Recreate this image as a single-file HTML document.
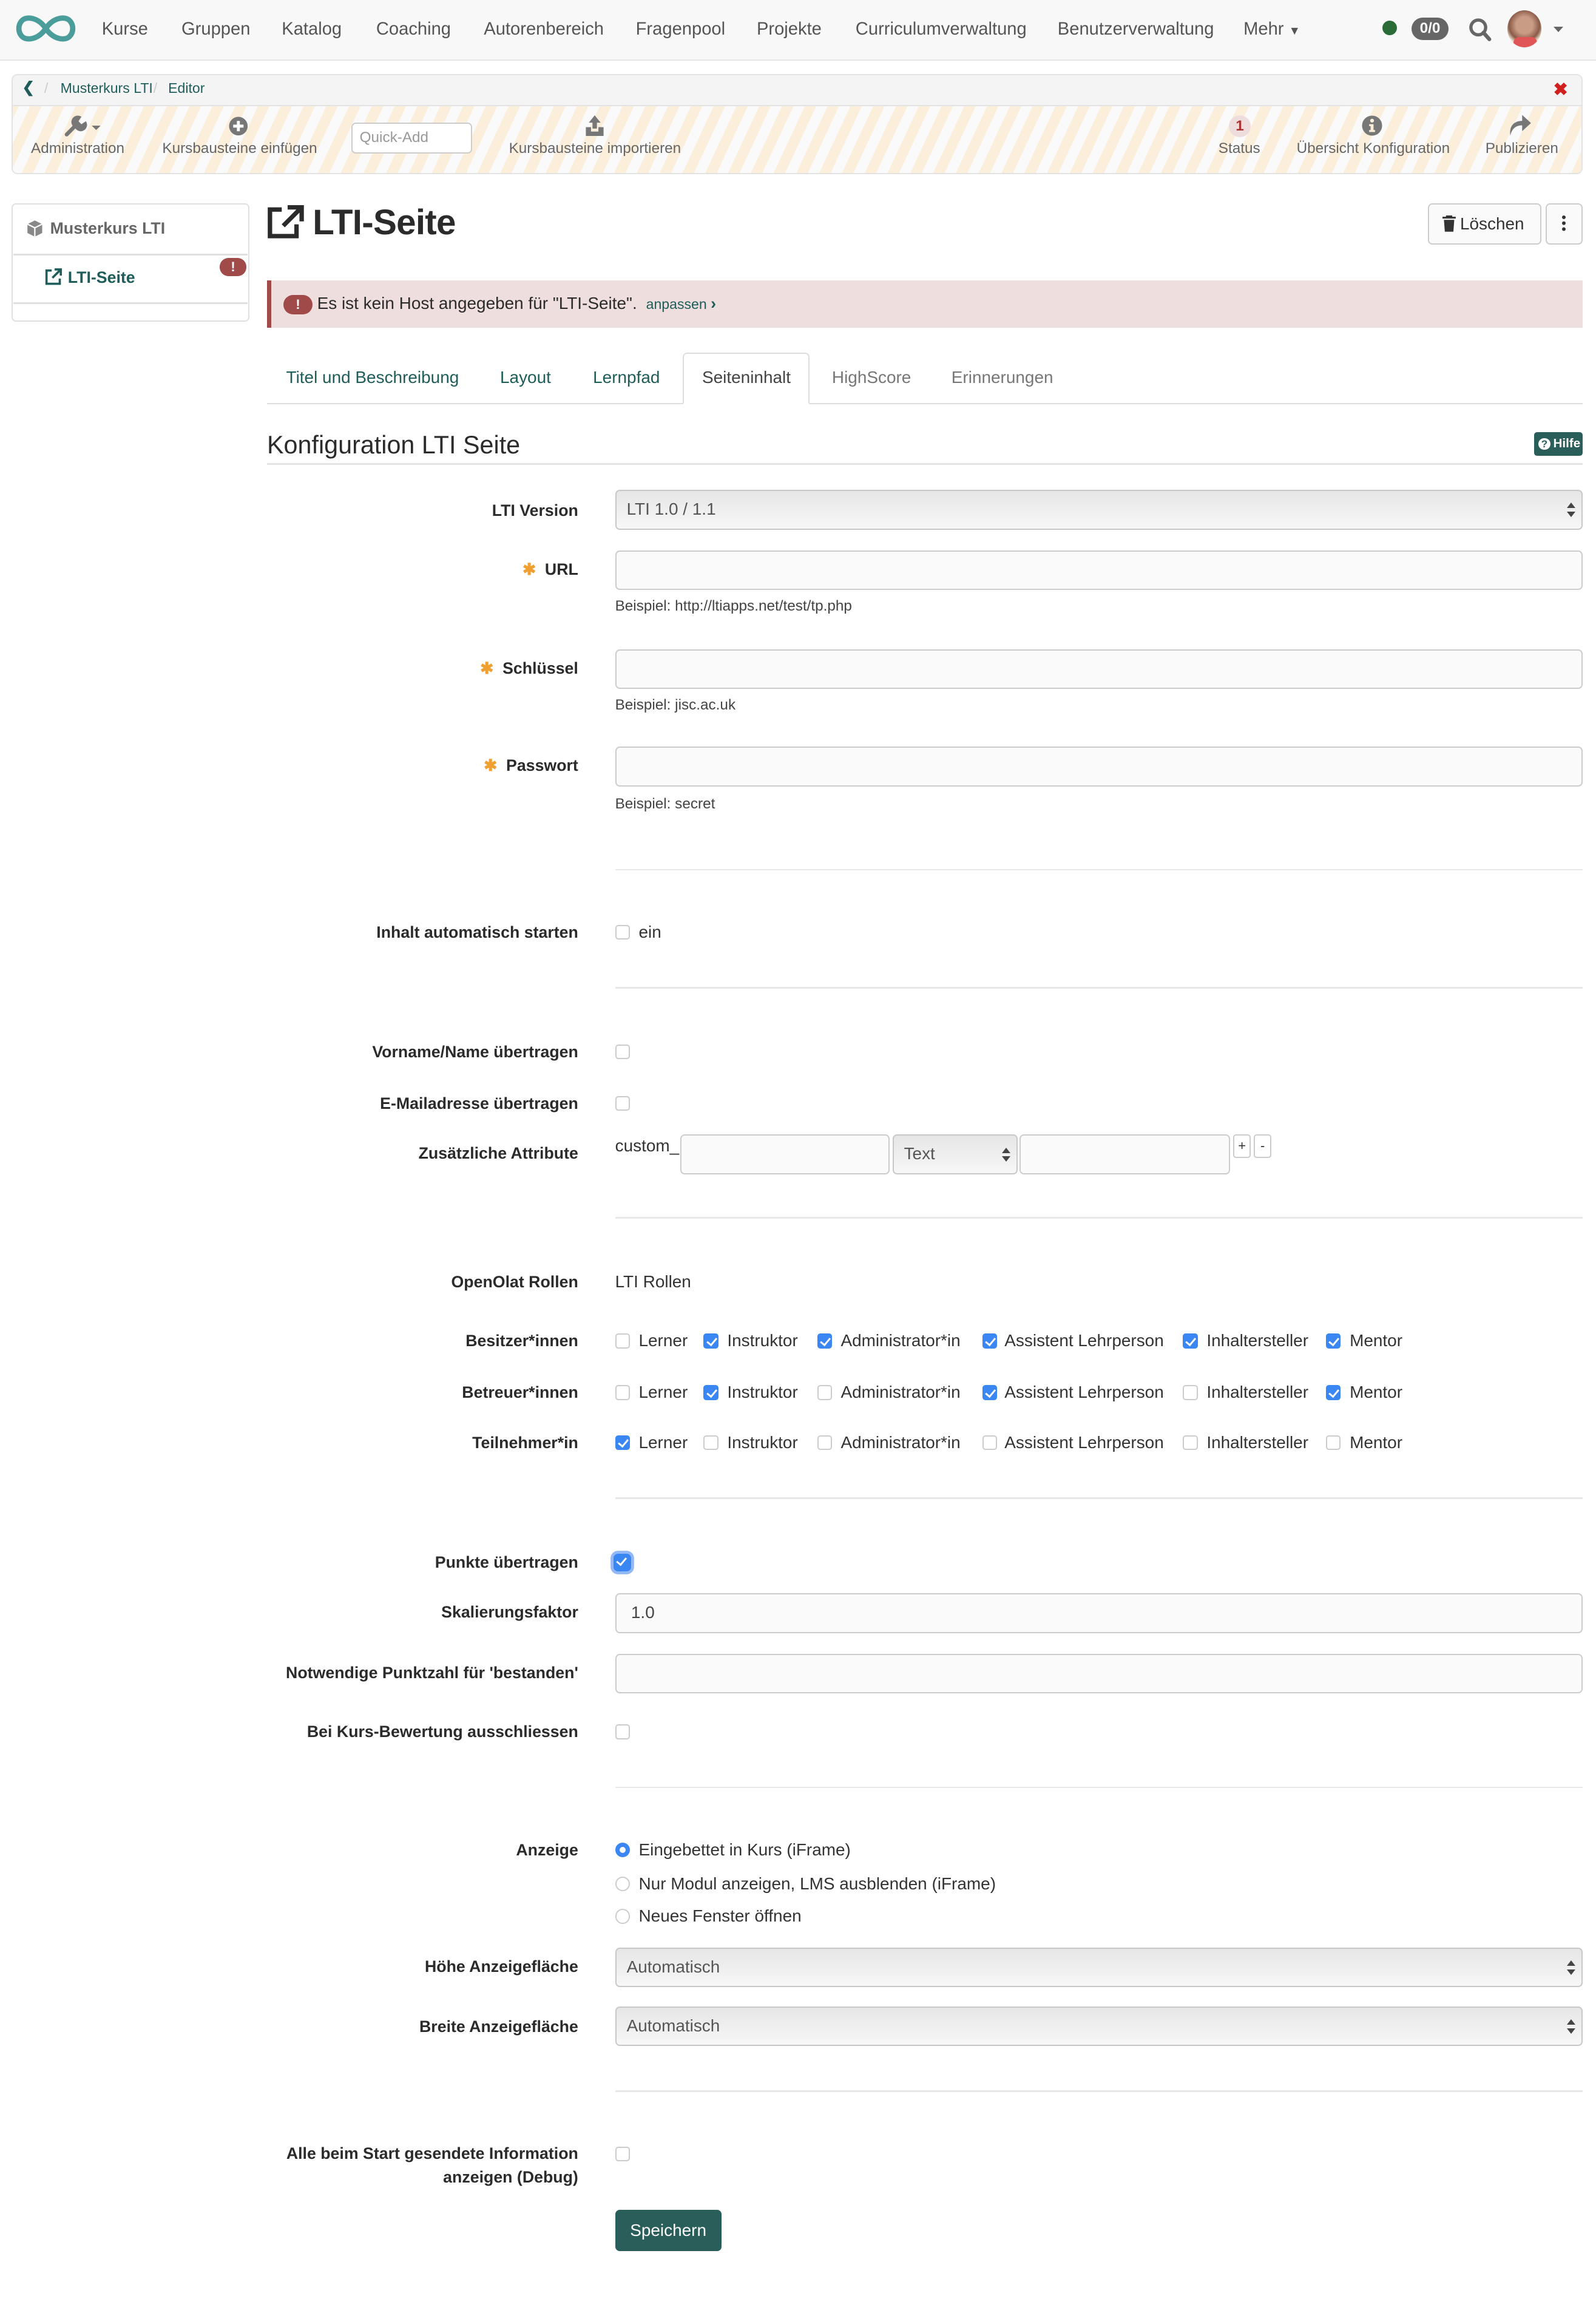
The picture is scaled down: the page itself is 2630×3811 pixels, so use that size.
<!DOCTYPE html>
<html><head><meta charset="utf-8">
<style>
html,body{margin:0;padding:0;background:#fff;}
body{width:2630px;height:3810px;overflow:hidden;}
#p{position:relative;width:1082px;height:1568px;zoom:2.4307;font-family:"Liberation Sans",sans-serif;color:#333;font-size:11.5px;}
#p *{box-sizing:border-box;}
.a{position:absolute;white-space:nowrap;line-height:16px;}
.l{position:absolute;right:690px;font-weight:bold;font-size:11px;line-height:16px;text-align:right;white-space:nowrap;color:#2b2b2b;}
.in{position:absolute;left:417px;width:656px;height:27px;border:1px solid #ccc;border-radius:3px;background:#fafafa;}
.sel{position:absolute;left:417px;width:656px;height:27px;border:1px solid #c8c8c8;border-radius:3px;background:linear-gradient(#e6e6e6,#f7f7f7);font-size:11.5px;line-height:25px;padding-left:7px;color:#555;}
.sel:after{content:"";position:absolute;right:4px;top:8px;width:0;height:0;border-left:3px solid transparent;border-right:3px solid transparent;border-bottom:4px solid #444;}
.sel:before{content:"";position:absolute;right:4px;top:14px;width:0;height:0;border-left:3px solid transparent;border-right:3px solid transparent;border-top:4px solid #444;}
.help{position:absolute;left:417px;font-size:10px;color:#444;line-height:14px;}
.hr{position:absolute;left:417px;width:656px;height:1px;background:#e8e8e8;}
.cb{position:absolute;width:10px;height:10px;border:1px solid #ccc;border-radius:2px;background:#fff;}
.cb.on{background:#3a86f3;border-color:#3a86f3;}
.cb.on:after{content:"";position:absolute;left:2.5px;top:0.5px;width:3px;height:5.5px;border:solid #fff;border-width:0 1.5px 1.5px 0;transform:rotate(40deg);}
.t{position:absolute;font-size:11.5px;line-height:16px;white-space:nowrap;color:#333;}
.nav{position:absolute;top:12px;font-size:12px;color:#555;line-height:16px;}
.tb{position:absolute;top:94px;font-size:10px;color:#666;line-height:14px;white-space:nowrap;}
.star{color:#f0a030;font-weight:bold;margin-right:6px;}
</style></head><body><div id="p">

<div style="position:absolute;left:0;top:0;width:1082px;height:41px;background:#f8f8f8;border-bottom:1px solid #e5e5e5;"></div>
<svg style="position:absolute;left:9px;top:8px" width="44" height="23" viewBox="0 0 44 23"><path d="M22 11.5 C17 4,9 3,6 6 C3 9,3 14,6 17 C9 20,17 19,22 11.5 C27 4,35 3,38 6 C41 9,41 14,38 17 C35 20,27 19,22 11.5Z" fill="none" stroke="#4a9d9a" stroke-width="3.6"/></svg>
<div class="nav" style="left:69px">Kurse</div>
<div class="nav" style="left:123px">Gruppen</div>
<div class="nav" style="left:191px">Katalog</div>
<div class="nav" style="left:255px">Coaching</div>
<div class="nav" style="left:328px">Autorenbereich</div>
<div class="nav" style="left:431px">Fragenpool</div>
<div class="nav" style="left:513px">Projekte</div>
<div class="nav" style="left:580px">Curriculumverwaltung</div>
<div class="nav" style="left:717px">Benutzerverwaltung</div>
<div class="nav" style="left:843px">Mehr <span style="font-size:8px">▼</span></div>
<div style="position:absolute;left:937px;top:14px;width:10px;height:10px;border-radius:50%;background:#2a6b38"></div>
<div style="position:absolute;left:957px;top:12px;width:25px;height:15px;border-radius:8px;background:#666;color:#fff;font-size:10px;font-weight:bold;text-align:center;line-height:15px">0/0</div>
<svg style="position:absolute;left:995px;top:11px" width="17" height="18" viewBox="0 0 17 18"><circle cx="7" cy="7.5" r="5" fill="none" stroke="#666" stroke-width="2.2"/><path d="M10.5 11 L14.5 15.5" stroke="#666" stroke-width="2.6" stroke-linecap="round"/></svg>
<div style="position:absolute;left:1022px;top:7px;width:23px;height:25px;border-radius:50%;background:radial-gradient(circle at 50% 40%,#c99c86 0 30%,#8a5a48 55%,#e8dcc8 70%),#e8dcc8;overflow:hidden"><div style="position:absolute;left:4px;top:18px;width:16px;height:8px;background:#e05555;border-radius:4px"></div></div>
<div style="position:absolute;left:1053px;top:18px;width:0;height:0;border-left:3.5px solid transparent;border-right:3.5px solid transparent;border-top:4px solid #666"></div>

<div style="position:absolute;left:8px;top:50px;width:1065px;height:68px;border:1px solid #e3e3e3;border-radius:4px;overflow:hidden">
 <div style="position:absolute;left:0;top:0;width:100%;height:21px;background:#f4f4f4;border-bottom:1px solid #e3e3e3"></div>
 <div style="position:absolute;left:0;top:21px;width:100%;height:47px;background:repeating-linear-gradient(-65deg,#fbeedb 0 7px,#fafafa 7px 14px)"></div>
</div>
<div class="a" style="left:15px;top:52px;font-size:10px;color:#1f5d5a;font-weight:bold">&#x276E;</div>
<div class="a" style="left:30px;top:52px;font-size:9.5px;color:#ccc">/</div>
<div class="a" style="left:41px;top:52px;font-size:9.5px;color:#1f5d5a">Musterkurs LTI</div>
<div class="a" style="left:104px;top:52px;font-size:9.5px;color:#ccc">/</div>
<div class="a" style="left:114px;top:52px;font-size:9.5px;color:#1f5d5a">Editor</div>
<div class="a" style="left:1053px;top:53px;font-size:12px;color:#d02020;font-weight:bold">✖</div>

<svg style="position:absolute;left:43px;top:78px" width="28" height="15" viewBox="0 0 28 15"><path d="M2 13 L8 7" stroke="#777" stroke-width="2.6" stroke-linecap="round"/><path d="M7 8 A4 4 0 0 1 12 1 L10 4 L12 6 L15 4 A4 4 0 0 1 8 9Z" fill="#777"/><path d="M19 7 L25 7 L22 10Z" fill="#777"/></svg>
<div class="tb" style="left:21px">Administration</div>
<svg style="position:absolute;left:155px;top:79px" width="13" height="13" viewBox="0 0 13 13"><circle cx="6.5" cy="6.5" r="6.3" fill="#777"/><path d="M6.5 3v7M3 6.5h7" stroke="#fff" stroke-width="2"/></svg>
<div class="tb" style="left:110px">Kursbausteine einfügen</div>
<div style="position:absolute;left:238px;top:83px;width:82px;height:21px;border:1px solid #ccc;border-radius:3px;background:#fff;font-size:10px;color:#999;line-height:19px;padding-left:5px">Quick-Add</div>
<svg style="position:absolute;left:396px;top:78px" width="14" height="14" viewBox="0 0 14 14"><path d="M7 0 L11 5 H8.5 V9 H5.5 V5 H3Z" fill="#777"/><path d="M1 8 H4.5 V11 H9.5 V8 H13 V14 H1Z" fill="#777"/></svg>
<div class="tb" style="left:345px">Kursbausteine importieren</div>
<div style="position:absolute;left:833px;top:78px;width:15px;height:15px;border-radius:50%;background:#efdcdc;color:#a33;font-size:10px;font-weight:bold;text-align:center;line-height:15px">1</div>
<div class="tb" style="left:826px">Status</div>
<svg style="position:absolute;left:923px;top:78px" width="14" height="14" viewBox="0 0 14 14"><circle cx="7" cy="7" r="6.8" fill="#777"/><circle cx="7" cy="3.6" r="1.3" fill="#fbeedb"/><path d="M5 6 H8 V10 H9 V11.3 H5 V10 H6 V7.3 H5Z" fill="#fbeedb"/></svg>
<div class="tb" style="left:879px">Übersicht Konfiguration</div>
<svg style="position:absolute;left:1022px;top:77px" width="17" height="15" viewBox="0 0 17 15"><path d="M2 15 C1 8,5 5,10 5 V1 L16 6.5 L10 12 V8 C6 8,3 10,2 15Z" fill="#777"/></svg>
<div class="tb" style="left:1007px">Publizieren</div>

<div style="position:absolute;left:8px;top:138px;width:161px;height:80px;border:1px solid #e0e0e0;border-radius:3px"></div>
<div style="position:absolute;left:9px;top:172px;width:159px;height:1px;background:#e0e0e0"></div>
<div style="position:absolute;left:9px;top:205px;width:159px;height:1px;background:#e0e0e0"></div>
<svg style="position:absolute;left:18px;top:149px" width="11" height="12" viewBox="0 0 11 12"><path d="M5.5 0.5 L10.5 3 V9 L5.5 11.5 L0.5 9 V3Z" fill="#888"/><path d="M0.5 3 L5.5 5.5 L10.5 3 M5.5 5.5 V11.5" stroke="#fff" stroke-width="0.9" fill="none"/></svg>
<div class="a" style="left:34px;top:147px;font-size:11px;font-weight:bold;color:#666">Musterkurs LTI</div>
<svg style="position:absolute;left:30px;top:182px" width="12" height="12" viewBox="0 0 12 12"><path d="M5 1.5 H1.5 V10.5 H10.5 V7" fill="none" stroke="#1f5d5a" stroke-width="1.5"/><path d="M7 0.8 H11.2 V5 M11 1 L5.5 6.5" fill="none" stroke="#1f5d5a" stroke-width="1.5"/></svg>
<div class="a" style="left:46px;top:180px;font-size:11px;font-weight:bold;color:#1f5d5a">LTI-Seite</div>
<div style="position:absolute;left:149px;top:175px;width:18px;height:12px;border-radius:6px;background:#a04a4a;color:#fff;font-size:9px;font-weight:bold;text-align:center;line-height:12px">!</div>

<svg style="position:absolute;left:181px;top:139px" width="25" height="23" viewBox="0 0 25 23"><path d="M10 3 H2 V21 H20 V13" fill="none" stroke="#2b2b2b" stroke-width="3"/><path d="M14 1.5 H23.5 V11 M23 2 L11 14" fill="none" stroke="#2b2b2b" stroke-width="3"/></svg>
<div class="a" style="left:212px;top:136px;font-size:24px;line-height:30px;color:#2b2b2b;font-weight:bold;letter-spacing:-0.3px">LTI-Seite</div>
<div style="position:absolute;left:968px;top:138px;width:77px;height:28px;border:1px solid #ccc;border-radius:3px;background:#fafafa;font-size:11.5px;line-height:26px;padding-left:21px;color:#333">Löschen</div>
<svg style="position:absolute;left:978px;top:146px" width="9" height="11" viewBox="0 0 9 11"><path d="M0 1.5 H9 M3 1.5 V0.3 H6 V1.5" stroke="#333" stroke-width="1.2" fill="none"/><path d="M1 3 H8 L7.4 11 H1.6Z" fill="#333"/></svg>
<div style="position:absolute;left:1048px;top:138px;width:25px;height:28px;border:1px solid #ccc;border-radius:3px;background:#fafafa"></div>
<div style="position:absolute;left:1059px;top:146px;width:2.5px;height:2.5px;background:#333;border-radius:50%;box-shadow:0 4px 0 #333,0 8px 0 #333"></div>

<div style="position:absolute;left:181px;top:190px;width:892px;height:32px;background:#eedede;border-left:3px solid #a04a4a"></div>
<div style="position:absolute;left:192px;top:200px;width:20px;height:13px;border-radius:7px;background:#a04a4a;color:#fff;font-size:9px;font-weight:bold;text-align:center;line-height:13px">!</div>
<div class="a" style="left:215px;top:198px;font-size:11.5px;color:#2b2b2b">Es ist kein Host angegeben für "LTI-Seite".</div>
<div class="a" style="left:438px;top:198px;font-size:9.5px;color:#1f5d5a">anpassen <b style="font-size:11px">›</b></div>

<div style="position:absolute;left:181px;top:273px;width:892px;height:1px;background:#ddd"></div>
<div style="position:absolute;left:463px;top:239px;width:86px;height:35px;border:1px solid #ddd;border-bottom:1px solid #fff;border-radius:3px 3px 0 0;background:#fff"></div>
<div class="t" style="left:194px;top:248px;color:#1f5d5a">Titel und Beschreibung</div>
<div class="t" style="left:339px;top:248px;color:#1f5d5a">Layout</div>
<div class="t" style="left:402px;top:248px;color:#1f5d5a">Lernpfad</div>
<div class="t" style="left:476px;top:248px;color:#444">Seiteninhalt</div>
<div class="t" style="left:564px;top:248px;color:#777">HighScore</div>
<div class="t" style="left:645px;top:248px;color:#777">Erinnerungen</div>

<div class="a" style="left:181px;top:291px;font-size:17px;line-height:22px;color:#2b2b2b">Konfiguration LTI Seite</div>
<div style="position:absolute;left:1040px;top:293px;width:33px;height:16px;border-radius:2px;background:#2a5e5b;color:#fff;font-size:8.5px;font-weight:bold;line-height:16px;padding-left:13px">Hilfe</div>
<div style="position:absolute;left:1043px;top:297px;width:8px;height:8px;border-radius:50%;background:#fff;color:#2a5e5b;font-size:7px;font-weight:bold;line-height:8px;text-align:center;font-family:'Liberation Sans',sans-serif">?</div>
<div style="position:absolute;left:181px;top:314px;width:892px;height:1px;background:#e5e5e5"></div>

<div class="l" style="top:338px">LTI Version</div>
<div class="sel" style="top:332px">LTI 1.0 / 1.1</div>

<div class="l" style="top:378px"><span class="star">✱</span>URL</div>
<div class="in" style="top:373px"></div>
<div class="help" style="top:404px">Beispiel: http://ltiapps.net/test/tp.php</div>

<div class="l" style="top:445px"><span class="star">✱</span>Schlüssel</div>
<div class="in" style="top:440px"></div>
<div class="help" style="top:471px">Beispiel: jisc.ac.uk</div>

<div class="l" style="top:511px"><span class="star">✱</span>Passwort</div>
<div class="in" style="top:506px"></div>
<div class="help" style="top:538px">Beispiel: secret</div>

<div class="hr" style="top:589px"></div>
<div class="l" style="top:624px">Inhalt automatisch starten</div>
<div class="cb" style="left:417px;top:627px"></div>
<div class="t" style="left:433px;top:624px">ein</div>

<div class="hr" style="top:669px"></div>
<div class="l" style="top:705px">Vorname/Name übertragen</div>
<div class="cb" style="left:417px;top:708px"></div>
<div class="l" style="top:740px">E-Mailadresse übertragen</div>
<div class="cb" style="left:417px;top:743px"></div>
<div class="l" style="top:774px">Zusätzliche Attribute</div>
<div class="t" style="left:417px;top:769px">custom_</div>
<div style="position:absolute;left:461px;top:769px;width:142px;height:27px;border:1px solid #ccc;border-radius:3px;background:#fafafa"></div>
<div class="sel" style="left:605px;top:769px;width:85px;">Text</div>
<div style="position:absolute;left:691px;top:769px;width:143px;height:27px;border:1px solid #ccc;border-radius:3px;background:#fafafa"></div>
<div style="position:absolute;left:836px;top:769px;width:12px;height:16px;border:1px solid #ccc;border-radius:2px;font-size:9px;text-align:center;line-height:14px">+</div>
<div style="position:absolute;left:850px;top:769px;width:12px;height:16px;border:1px solid #ccc;border-radius:2px;font-size:9px;text-align:center;line-height:14px">-</div>

<div class="hr" style="top:825px"></div>
<div class="l" style="top:861px">OpenOlat Rollen</div>
<div class="t" style="left:417px;top:861px">LTI Rollen</div>

<div class="l" style="top:901px">Besitzer*innen</div>
<div class="l" style="top:936px">Betreuer*innen</div>
<div class="l" style="top:970px">Teilnehmer*in</div>

<div class="cb" style="left:417px;top:904px"></div><div class="t" style="left:433px;top:901px">Lerner</div>
<div class="cb on" style="left:477px;top:904px"></div><div class="t" style="left:493px;top:901px">Instruktor</div>
<div class="cb on" style="left:554px;top:904px"></div><div class="t" style="left:570px;top:901px">Administrator*in</div>
<div class="cb on" style="left:666px;top:904px"></div><div class="t" style="left:681px;top:901px">Assistent Lehrperson</div>
<div class="cb on" style="left:802px;top:904px"></div><div class="t" style="left:818px;top:901px">Inhaltersteller</div>
<div class="cb on" style="left:899px;top:904px"></div><div class="t" style="left:915px;top:901px">Mentor</div>
<div class="cb" style="left:417px;top:939px"></div><div class="t" style="left:433px;top:936px">Lerner</div>
<div class="cb on" style="left:477px;top:939px"></div><div class="t" style="left:493px;top:936px">Instruktor</div>
<div class="cb" style="left:554px;top:939px"></div><div class="t" style="left:570px;top:936px">Administrator*in</div>
<div class="cb on" style="left:666px;top:939px"></div><div class="t" style="left:681px;top:936px">Assistent Lehrperson</div>
<div class="cb" style="left:802px;top:939px"></div><div class="t" style="left:818px;top:936px">Inhaltersteller</div>
<div class="cb on" style="left:899px;top:939px"></div><div class="t" style="left:915px;top:936px">Mentor</div>
<div class="cb on" style="left:417px;top:973px"></div><div class="t" style="left:433px;top:970px">Lerner</div>
<div class="cb" style="left:477px;top:973px"></div><div class="t" style="left:493px;top:970px">Instruktor</div>
<div class="cb" style="left:554px;top:973px"></div><div class="t" style="left:570px;top:970px">Administrator*in</div>
<div class="cb" style="left:666px;top:973px"></div><div class="t" style="left:681px;top:970px">Assistent Lehrperson</div>
<div class="cb" style="left:802px;top:973px"></div><div class="t" style="left:818px;top:970px">Inhaltersteller</div>
<div class="cb" style="left:899px;top:973px"></div><div class="t" style="left:915px;top:970px">Mentor</div>

<div class="hr" style="top:1015px"></div>
<div class="l" style="top:1051px">Punkte übertragen</div>
<div class="cb on" style="left:416px;top:1053px;width:12px;height:12px;box-shadow:0 0 0 2px #93b8f6;border-radius:3px"></div>
<div class="l" style="top:1085px">Skalierungsfaktor</div>
<div class="in" style="top:1080px;font-size:11.5px;line-height:25px;padding-left:10px;color:#444">1.0</div>
<div class="l" style="top:1126px">Notwendige Punktzahl für 'bestanden'</div>
<div class="in" style="top:1121px"></div>
<div class="l" style="top:1166px">Bei Kurs-Bewertung ausschliessen</div>
<div class="cb" style="left:417px;top:1169px"></div>

<div class="hr" style="top:1211px"></div>
<div class="l" style="top:1246px">Anzeige</div>
<div style="position:absolute;left:417px;top:1249px;width:10px;height:10px;border-radius:50%;border:3px solid #3a86f3;background:#fff"></div>
<div class="t" style="left:433px;top:1246px">Eingebettet in Kurs (iFrame)</div>
<div style="position:absolute;left:417px;top:1272px;width:10px;height:10px;border-radius:50%;border:1px solid #ccc;background:#fff"></div>
<div class="t" style="left:433px;top:1269px">Nur Modul anzeigen, LMS ausblenden (iFrame)</div>
<div style="position:absolute;left:417px;top:1294px;width:10px;height:10px;border-radius:50%;border:1px solid #ccc;background:#fff"></div>
<div class="t" style="left:433px;top:1291px">Neues Fenster öffnen</div>

<div class="l" style="top:1325px">Höhe Anzeigefläche</div>
<div class="sel" style="top:1320px">Automatisch</div>
<div class="l" style="top:1366px">Breite Anzeigefläche</div>
<div class="sel" style="top:1360px">Automatisch</div>

<div class="hr" style="top:1417px"></div>
<div class="l" style="top:1452px">Alle beim Start gesendete Information<br>anzeigen (Debug)</div>
<div class="cb" style="left:417px;top:1455px"></div>

<div style="position:absolute;left:417px;top:1498px;width:72px;height:28px;border-radius:3px;background:#2a5e5b;color:#fff;font-size:11.5px;line-height:28px;text-align:center">Speichern</div>

</div></body></html>
